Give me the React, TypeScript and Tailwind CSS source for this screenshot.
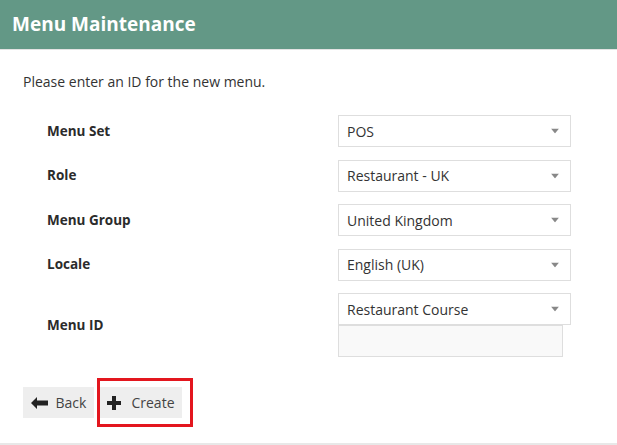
import React from "react";

const Caret = () => (
  <svg width="8" height="5" viewBox="0 0 8 5" className="absolute right-[11px] top-1/2 -translate-y-1/2">
    <path d="M0 0 L8 0 L4 5 Z" fill="#888" />
  </svg>
);

const Select = ({ value }: { value: string }) => (
  <div className="relative h-[32px] w-[233px] border border-[#dedede] bg-white flex items-center pl-[8px] text-[14px] text-[#333]">
    {value}
    <Caret />
  </div>
);

const Label = ({ children }: { children: React.ReactNode }) => (
  <div className="w-[315px] pl-[24px] font-bold text-[13.5px] text-[#2b2b2b]">{children}</div>
);

export default function App() {
  return (
    <div
      className="relative w-[617px] h-[445px] bg-white overflow-hidden"
      style={{ fontFamily: '"Open Sans", sans-serif' }}
    >
      <div className="h-[50px] bg-[#639886] border-b border-[#e3e3e3] flex items-center pl-[12px]">
        <span className="text-white font-bold text-[19px] leading-none">Menu Maintenance</span>
      </div>
      <div className="pl-[23px] pt-[23px]">
        <p className="text-[14px] text-[#333] leading-[18px]">Please enter an ID for the new menu.</p>
        <div className="mt-[24px] flex flex-col gap-[12.5px]">
          <div className="flex items-center">
            <Label>Menu Set</Label>
            <Select value="POS" />
          </div>
          <div className="flex items-center">
            <Label>Role</Label>
            <Select value="Restaurant - UK" />
          </div>
          <div className="flex items-center">
            <Label>Menu Group</Label>
            <Select value="United Kingdom" />
          </div>
          <div className="flex items-center">
            <Label>Locale</Label>
            <Select value="English (UK)" />
          </div>
          <div className="flex items-center">
            <Label>Menu ID</Label>
            <div className="flex flex-col">
              <Select value="Restaurant Course" />
              <div className="h-[32px] w-[225px] border border-[#dedede] bg-[#f9f9f9]" />
            </div>
          </div>
        </div>
        <div className="mt-[30px] flex gap-[6px]">
          <button className="h-[31px] w-[71px] bg-[#eeeeee] flex items-center justify-center gap-[8px] text-[14px] text-[#444]">
            <svg width="17" height="12" viewBox="0 0 17 12">
              <path d="M0 6 L6 0 L6 3.5 L17 3.5 L17 8.5 L6 8.5 L6 12 Z" fill="#222" />
            </svg>
            Back
          </button>
          <button className="h-[31px] w-[82px] bg-[#eeeeee] flex items-center justify-center gap-[10px] text-[14px] text-[#444]">
            <svg width="14" height="14" viewBox="0 0 14 14">
              <path d="M5 0 H9 V5 H14 V9 H9 V14 H5 V9 H0 V5 H5 Z" fill="#222" />
            </svg>
            Create
          </button>
        </div>
      </div>
      <div className="absolute left-[97px] top-[378px] w-[96px] h-[49px] border-[3px] border-[#e3161e]" />
      <div className="absolute left-0 bottom-0 w-full h-[2px] bg-[#e8e8e8]" />
    </div>
  );
}
